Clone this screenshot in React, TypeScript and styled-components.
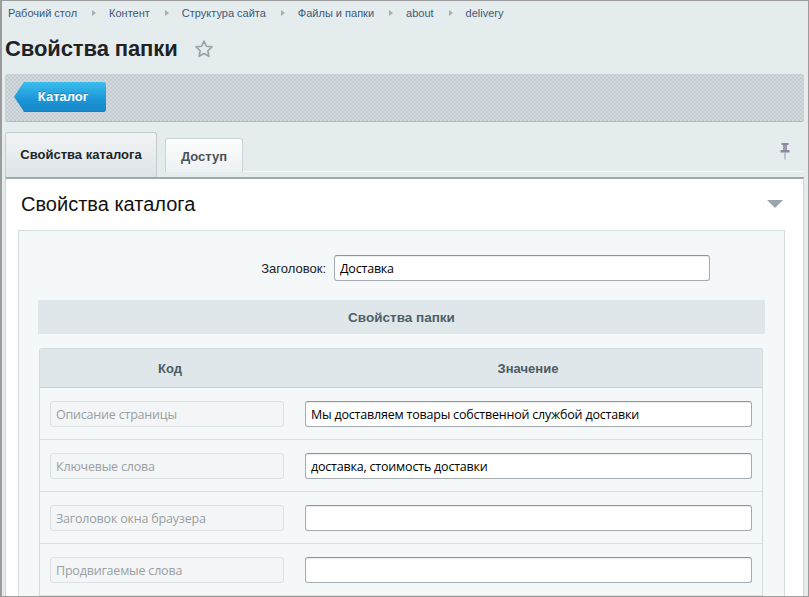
import React from "react";
import styled, { createGlobalStyle } from "styled-components";

const GlobalStyle = createGlobalStyle`
  html, body { margin: 0; padding: 0; }
  body { font-family: "Liberation Sans", Arial, sans-serif; background: #e5ecee; }
  * { box-sizing: border-box; }
`;

const Frame = styled.div`
  width: 809px;
  height: 597px;
  overflow: hidden;
  border: 1px solid #9c9c9c;
  border-left-width: 2px;
  background: #e5ecee;
  padding: 0 4px 0 3px;
  display: flex;
  flex-direction: column;
`;

const Breadcrumbs = styled.nav`
  display: flex;
  align-items: center;
  height: 25px;
  padding-left: 3px;
  font-size: 11px;
  color: #3a5a7a;
`;

const Crumb = styled.span`
  white-space: nowrap;
`;

const CrumbSep = styled.span`
  width: 0;
  height: 0;
  border-top: 3.5px solid transparent;
  border-bottom: 3.5px solid transparent;
  border-left: 4px solid #a6adb2;
  margin: 0 13px 0 15px;
`;

const TitleRow = styled.div`
  display: flex;
  align-items: center;
  height: 48px;
  padding-left: 0;
  padding-bottom: 2px;
`;

const Title = styled.h1`
  margin: 0;
  font-size: 22px;
  font-weight: bold;
  color: #1f2326;
  letter-spacing: -0.1px;
`;

const StarBtn = styled.span`
  display: inline-flex;
  margin-left: 16px;
  margin-top: 1px;
`;

const Toolbar = styled.div`
  height: 48px;
  margin-top: 1px;
  border-radius: 3px;
  border-bottom: 1px solid #b1babe;
  background-color: #d2dadd;
  background-image: radial-gradient(circle, #bac4c8 0.6px, transparent 0.9px),
    radial-gradient(circle, #bac4c8 0.6px, transparent 0.9px);
  background-size: 4px 4px;
  background-position: 0 0, 2px 2px;
  display: flex;
  align-items: center;
  padding-left: 9px;
`;

const BackButton = styled.button`
  height: 30px;
  width: 92px;
  border: none;
  padding: 0 0 0 6px;
  clip-path: polygon(10px 0, 100% 0, 100% 100%, 10px 100%, 0 50%);
  border-radius: 0 3px 3px 0;
  background: linear-gradient(#3bbdee, #1c95d6 60%, #1787c8);
  box-shadow: inset 0 -1px 0 #1477b3;
  color: #fff;
  font-family: "Liberation Sans", Arial, sans-serif;
  font-weight: bold;
  font-size: 13px;
  text-shadow: 0 -1px 0 rgba(0, 70, 120, 0.35);
  margin-bottom: 2px;
`;

const TabBar = styled.div`
  display: flex;
  align-items: flex-end;
  height: 45px;
  margin-top: 10px;
`;

const ActiveTab = styled.div`
  width: 152px;
  height: 45px;
  border: 1px solid #c3cbcf;
  border-bottom: none;
  border-radius: 3px 3px 0 0;
  background: linear-gradient(#f1f4f5, #dde4e7);
  font-weight: bold;
  font-size: 13px;
  color: #202428;
  display: flex;
  align-items: center;
  justify-content: center;
  padding-bottom: 1px;
`;

const Tab = styled.div`
  width: 78px;
  height: 34px;
  margin-left: 8px;
  margin-bottom: 5px;
  border: 1px solid #cbd3d6;
  border-bottom: none;
  border-radius: 3px 3px 0 0;
  background: linear-gradient(#fcfdfd, #edf1f3);
  font-weight: bold;
  font-size: 13px;
  color: #4c5257;
  display: flex;
  align-items: center;
  justify-content: center;
  padding-top: 2px;
`;

const TabFiller = styled.div`
  flex: 1;
  align-self: stretch;
  margin-bottom: 5px;
  border-bottom: 1px solid #f5f8f9;
  display: flex;
  justify-content: flex-end;
  padding: 11px 14px 0 0;
`;

const Panel = styled.section`
  flex: 1;
  background: #fff;
  border-top: 2px solid #9fa8ad;
  border-left: 1px solid #cdd5d8;
  border-right: 1px solid #cdd5d8;
  display: flex;
  flex-direction: column;
`;

const PanelHead = styled.div`
  height: 51px;
  display: flex;
  align-items: center;
  justify-content: space-between;
  padding: 0 20px 1px 15px;
`;

const PanelTitle = styled.h2`
  margin: 0;
  font-size: 20px;
  font-weight: normal;
  color: #111;
`;

const Collapse = styled.span`
  width: 0;
  height: 0;
  border-left: 8px solid transparent;
  border-right: 8px solid transparent;
  border-top: 8px solid #9aa5ab;
`;

const InnerBox = styled.div`
  flex: 1;
  margin: 0 18px 0 12px;
  background: #f5f8f9;
  border: 1px solid #d5dde0;
  border-bottom: none;
  padding: 24px 19px 0 19px;
`;

const FieldRow = styled.div`
  display: grid;
  grid-template-columns: 288px 376px;
  column-gap: 8px;
  align-items: center;
`;

const FieldLabel = styled.label`
  text-align: right;
  font-size: 13px;
  color: #222;
  padding-top: 1px;
`;

const TextInput = styled.input<{ $muted?: boolean }>`
  height: 26px;
  width: 100%;
  border-radius: 3px;
  border: 1px solid ${(p) => (p.$muted ? "#dde2e4" : "#a3abb0")};
  border-top-color: ${(p) => (p.$muted ? "#dde2e4" : "#8d969c")};
  background: ${(p) => (p.$muted ? "#f3f5f6" : "#fff")};
  box-shadow: ${(p) => (p.$muted ? "none" : "inset 0 1px 1px rgba(0,0,0,0.08)")};
  padding: 1px 5px 0;
  font-family: "Open Sans", Roboto, sans-serif;
  font-size: 12.5px;
  letter-spacing: -0.2px;
  color: #000;
  outline: none;
  &::placeholder {
    color: #9a9fa2;
  }
`;

const SectionBar = styled.div`
  height: 34px;
  margin-top: 19px;
  background: #e0e7ea;
  display: flex;
  align-items: center;
  justify-content: center;
  font-weight: bold;
  font-size: 13.5px;
  color: #4d5f66;
  padding-top: 1px;
`;

const Table = styled.div`
  margin: 14px 2px 0 1px;
  border: 1px solid #d3dadd;
  border-bottom: none;
  border-radius: 3px 3px 0 0;
`;

const HeadRow = styled.div`
  display: grid;
  grid-template-columns: 254px 1fr;
  height: 39px;
  background: #e0e7ea;
  border-bottom: 1px solid #c9d1d4;
  align-items: center;
  font-weight: bold;
  font-size: 13px;
  color: #4d5c63;
`;

const HeadCell = styled.div<{ $shift?: number }>`
  text-align: center;
  padding-left: ${(p) => p.$shift ?? 0}px;
`;

const Row = styled.div`
  display: grid;
  grid-template-columns: 254px 1fr;
  height: 52px;
  border-bottom: 1px solid #d8dfe2;
  align-items: center;
`;

const Cell = styled.div<{ $right?: number; $left?: number }>`
  padding: 0 ${(p) => p.$right ?? 10}px 0 ${(p) => p.$left ?? 10}px;
`;

const Star = () => (
  <svg width="20" height="20" viewBox="0 0 24 24" fill="none" stroke="#9aa2a7" strokeWidth="2" strokeLinejoin="round">
    <polygon points="12,2.5 14.9,8.7 21.6,9.5 16.6,14.1 17.9,20.8 12,17.5 6.1,20.8 7.4,14.1 2.4,9.5 9.1,8.7" />
  </svg>
);

const Pin = () => (
  <svg width="10" height="17" viewBox="0 0 10 17">
    <rect x="1.5" y="0" width="7" height="2" fill="#8c8a9a" />
    <rect x="3" y="2" width="4" height="5" fill="#9c9aaa" />
    <rect x="0.5" y="7" width="9" height="2.5" fill="#8c8a9a" />
    <rect x="4.5" y="9.5" width="1" height="7" fill="#8e97a0" />
  </svg>
);

const crumbs = ["Рабочий стол", "Контент", "Структура сайта", "Файлы и папки", "about", "delivery"];

const rows = [
  { code: "Описание страницы", value: "Мы доставляем товары собственной службой доставки" },
  { code: "Ключевые слова", value: "доставка, стоимость доставки" },
  { code: "Заголовок окна браузера", value: "" },
  { code: "Продвигаемые слова", value: "" },
];

export default function App() {
  return (
    <>
      <GlobalStyle />
      <Frame>
        <Breadcrumbs>
          {crumbs.map((c, i) => (
            <React.Fragment key={c}>
              {i > 0 && <CrumbSep />}
              <Crumb>{c}</Crumb>
            </React.Fragment>
          ))}
        </Breadcrumbs>
        <TitleRow>
          <Title>Свойства папки</Title>
          <StarBtn>
            <Star />
          </StarBtn>
        </TitleRow>
        <Toolbar>
          <BackButton>Каталог</BackButton>
        </Toolbar>
        <TabBar>
          <ActiveTab>Свойства каталога</ActiveTab>
          <Tab>Доступ</Tab>
          <TabFiller>
            <Pin />
          </TabFiller>
        </TabBar>
        <Panel>
          <PanelHead>
            <PanelTitle>Свойства каталога</PanelTitle>
            <Collapse />
          </PanelHead>
          <InnerBox>
            <FieldRow>
              <FieldLabel>Заголовок:</FieldLabel>
              <TextInput defaultValue="Доставка" />
            </FieldRow>
            <SectionBar>Свойства папки</SectionBar>
            <Table>
              <HeadRow>
                <HeadCell $shift={6}>Код</HeadCell>
                <HeadCell>Значение</HeadCell>
              </HeadRow>
              {rows.map((r) => (
                <Row key={r.code}>
                  <Cell>
                    <TextInput $muted readOnly placeholder={r.code} />
                  </Cell>
                  <Cell $left={11}>
                    <TextInput defaultValue={r.value} />
                  </Cell>
                </Row>
              ))}
            </Table>
          </InnerBox>
        </Panel>
      </Frame>
    </>
  );
}
